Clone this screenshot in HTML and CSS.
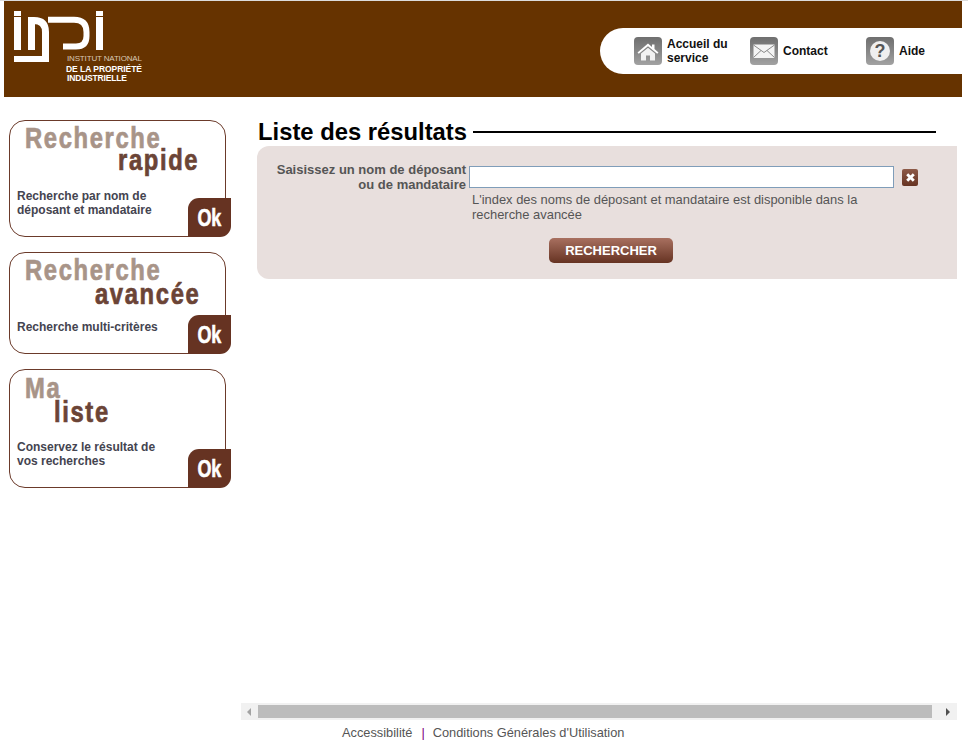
FILE: index.html
```html
<!DOCTYPE html>
<html lang="fr">
<head>
<meta charset="utf-8">
<title>INPI - Liste des résultats</title>
<link rel="stylesheet" href="styles.css">
</head>
<body>
<header class="header">
  <svg class="logo" width="140" height="96" viewBox="0 0 140 96" aria-label="INPI">
    <g fill="#fff">
      <rect x="10" y="10" width="7" height="5"/>
      <rect x="10" y="16" width="7" height="33"/>
      <rect x="10" y="55" width="35" height="6"/>
      <rect x="92" y="10" width="7" height="5"/>
      <rect x="92" y="16" width="7" height="33"/>
    </g>
    <g fill="none" stroke="#fff" stroke-width="7">
      <path d="M27.5 49V19.5H30Q41.5 19.5 41.5 31V61"/>
      <path d="M44 18.8H70Q82.5 18.8 82.5 31V35Q82.5 45.5 72 45.5H59" stroke-width="6"/>
    </g>
    <text class="logo-line1" x="63" y="60" textLength="75">INSTITUT NATIONAL</text>
    <text class="logo-line2" x="62" y="70.5" textLength="76">DE LA PROPRIÉTÉ</text>
    <text class="logo-line2" x="63" y="80" textLength="60">INDUSTRIELLE</text>
  </svg>
  <nav class="nav">
    <a class="nav-item" href="#">
      <svg class="nav-icon" width="28" height="28" viewBox="0 0 28 28">
        <use href="#tile"/>
        <path d="M3.5 15.5L14 6.5l4 3.4V7.5h2.5v4.6l4 3.4-1.3 1.2L14 9.2 4.8 16.7z" fill="#fff"/>
        <path d="M7 16.5L14 10.8l7 5.7v7h-5v-5h-4v5H7z" fill="#f2f2f2"/>
      </svg>
      <span>Accueil du<br>service</span>
    </a>
    <a class="nav-item" href="#">
      <svg class="nav-icon" width="28" height="28" viewBox="0 0 28 28">
        <use href="#tile"/>
        <rect x="3.5" y="7.5" width="21" height="13.5" fill="#f4f4f4"/>
        <path d="M3.5 8l10.5 7.5L24.5 8M3.5 20.5l7.5-7M24.5 20.5l-7.5-7" fill="none" stroke="#8a8a8a" stroke-width="1"/>
      </svg>
      <span>Contact</span>
    </a>
    <a class="nav-item" href="#">
      <svg class="nav-icon" width="28" height="28" viewBox="0 0 28 28">
        <use href="#tile"/>
        <circle cx="14" cy="14" r="10" fill="#efefef"/>
        <text class="qmark" x="14" y="19.5" text-anchor="middle">?</text>
      </svg>
      <span>Aide</span>
    </a>
  </nav>
</header>

<svg class="defs" width="0" height="0">
  <defs>
    <linearGradient id="tileGrad" x1="0" y1="0" x2="0" y2="1">
      <stop offset="0" stop-color="#6f6f6f"/>
      <stop offset="0.5" stop-color="#868686"/>
      <stop offset="1" stop-color="#a2a2a2"/>
    </linearGradient>
    <rect id="tile" width="28" height="28" rx="4" fill="url(#tileGrad)"/>
  </defs>
</svg>

<div class="page">
  <aside class="sidebar">
    <a class="card card-rapide" href="#">
      <div class="card-title">Recherche</div>
      <div class="card-sub sub-rapide">rapide</div>
      <p class="card-text">Recherche par nom de<br>déposant et mandataire</p>
      <span class="ok"><span class="ok-label">Ok</span></span>
    </a>
    <a class="card card-avancee" href="#">
      <div class="card-title">Recherche</div>
      <div class="card-sub sub-avancee">avancée</div>
      <p class="card-text">Recherche multi-critères</p>
      <span class="ok"><span class="ok-label">Ok</span></span>
    </a>
    <a class="card card-liste" href="#">
      <div class="card-title">Ma</div>
      <div class="card-sub sub-liste">liste</div>
      <p class="card-text">Conservez le résultat de<br>vos recherches</p>
      <span class="ok"><span class="ok-label">Ok</span></span>
    </a>
  </aside>

  <main class="main">
    <div class="heading">
      <h1>Liste des résultats</h1>
      <span class="heading-rule"></span>
    </div>
    <form class="panel">
      <label class="field-label" for="q">Saisissez un nom de déposant<br>ou de mandataire</label>
      <div class="field">
        <div class="input-row">
          <input id="q" class="input" type="text">
          <button class="clear" type="button" aria-label="Effacer">
            <svg width="11" height="11" viewBox="0 0 10 10"><path d="M2 2l6 6M8 2l-6 6" stroke="#fff" stroke-width="2.6"/></svg>
          </button>
        </div>
        <p class="help">L'index des noms de déposant et mandataire est disponible dans la recherche avancée</p>
      </div>
      <div class="actions"><button class="submit" type="button">RECHERCHER</button></div>
    </form>

    <div class="scrollbar">
      <span class="arrow arrow-left"></span>
      <span class="thumb"></span>
      <span class="arrow arrow-right"></span>
    </div>
    <footer class="footer">
      <a href="#">Accessibilité</a>
      <span class="sep">|</span>
      <a class="footer-last" href="#">Conditions Générales d'Utilisation</a>
    </footer>
  </main>
</div>
</body>
</html>
```
FILE: styles.css
```css
* { box-sizing: border-box; }
html, body { margin: 0; height: 100%; }
body {
  height: 746px;
  overflow: hidden;
  display: flex;
  flex-direction: column;
  border-top: 1px solid #dcdcdc;
  background: #fff;
  font-family: "Liberation Sans", Arial, sans-serif;
  font-size: 12px;
  color: #555;
}
a { text-decoration: none; color: inherit; }
.defs { position: absolute; }

.header {
  flex: none;
  width: 958px;
  height: 96px;
  margin-left: 4px;
  background: #663300;
  display: flex;
  justify-content: space-between;
  align-items: flex-start;
}
.logo { display: block; }
.logo-line1 { font: 8px "Liberation Sans", sans-serif; fill: #d9c8b6; }
.logo-line2 { font: bold 8.5px "Liberation Sans", sans-serif; fill: #fff; }
.nav {
  width: 362px;
  height: 46px;
  margin-top: 27px;
  padding-left: 34px;
  background: #fff;
  border-radius: 23px 0 0 23px;
  display: flex;
  align-items: center;
}
.nav-item {
  flex: none;
  width: 116px;
  display: flex;
  align-items: center;
  gap: 5px;
  font-weight: bold;
  line-height: 14px;
  color: #111;
}
.nav-icon { flex: none; display: block; }
.qmark { font: bold 18px "Liberation Sans", sans-serif; fill: #555; }

.page { flex: 1; display: flex; min-height: 0; }
.sidebar {
  flex: none;
  width: 241px;
  padding: 23px 0 0 9px;
  display: flex;
  flex-direction: column;
  gap: 15px;
}
.card {
  position: relative;
  display: block;
  width: 217px;
  padding: 0 0 0 7px;
  border: 1px solid #6b3a2a;
  border-radius: 16px;
  background: #fff;
}
.card-rapide { height: 117px; }
.card-avancee { height: 102px; }
.card-liste { height: 119px; }
.card-title, .card-sub {
  font-weight: bold;
  font-size: 29px;
  line-height: 26px;
  letter-spacing: 2px;
  white-space: nowrap;
  -webkit-text-stroke: 0.7px currentColor;
  transform: scaleX(0.82);
  transform-origin: left center;
}
.card-title { color: #a89488; margin: 4px 0 0 8px; }
.card-sub { color: #6b4436; }
.sub-rapide { margin: -4px 0 0 101px; }
.sub-avancee { margin: -2px 0 0 78px; }
.sub-liste { margin: -2px 0 0 37px; }
.card-liste .card-title { margin-top: 5px; }
.card-text {
  margin: 0;
  font-weight: bold;
  line-height: 14px;
  color: #444450;
}
.card-rapide .card-text { margin-top: 16px; }
.card-avancee .card-text { margin-top: 13px; }
.card-liste .card-text { margin-top: 15px; }
.ok {
  position: absolute;
  right: -6px;
  bottom: -1px;
  width: 43px;
  height: 39px;
  background: #663322;
  border-radius: 11px 0 11px 0;
  color: #fff;
  font-weight: bold;
  font-size: 23px;
  line-height: 41px;
  text-align: center;
}
.ok-label {
  display: inline-block;
  -webkit-text-stroke: 0.6px currentColor;
  transform: scaleX(0.78);
}

.main {
  flex: none;
  width: 716px;
  display: flex;
  flex-direction: column;
}
.heading {
  display: flex;
  align-items: center;
  gap: 6px;
  margin: 21px 21px 0 17px;
}
.heading h1 {
  margin: 0;
  font-size: 23.8px;
  line-height: 28px;
  font-weight: bold;
  color: #000;
}
.heading-rule { flex: 1; height: 2px; background: #000; }
.panel {
  margin: 0 0 0 16px;
  height: 133px;
  padding: 20px 0 0 0;
  background: #e8dfdd;
  border-radius: 12px 0 0 12px;
  display: grid;
  grid-template-columns: 209px 1fr;
  column-gap: 3px;
  align-content: start;
}
.field-label {
  text-align: right;
  font-size: 13px;
  font-weight: bold;
  line-height: 15px;
  margin-top: -4px;
  color: #555;
  white-space: nowrap;
}
.input-row { display: flex; align-items: center; gap: 8px; }
.input {
  width: 425px;
  height: 22px;
  padding: 0;
  border: 1px solid #7f9db9;
  background: #fff;
}
.clear {
  width: 16px;
  height: 17px;
  padding: 0;
  border: 0;
  border-radius: 2px;
  background: linear-gradient(#8d5a48, #663322);
  display: flex;
  align-items: center;
  justify-content: center;
}
.help {
  margin: 4px 0 0 3px;
  width: 400px;
  font-size: 12.93px;
  line-height: 15px;
  color: #555;
}
.actions {
  grid-column: 1 / -1;
  margin: 16px 0 0 292px;
}
.submit {
  width: 124px;
  height: 25px;
  padding: 0;
  border: 0;
  border-radius: 5px;
  background: linear-gradient(#a87060, #663322);
  color: #fff;
  font: bold 13px "Liberation Sans", sans-serif;
}
.scrollbar {
  margin-top: auto;
  height: 17px;
  background: #f1f1f1;
  display: flex;
  align-items: center;
  justify-content: space-between;
}
.thumb { width: 674px; height: 13px; background: #bcbcbc; }
.arrow { width: 0; height: 0; border-top: 4px solid transparent; border-bottom: 4px solid transparent; }
.arrow-left { margin-left: 6px; margin-right: 7px; border-right: 4px solid #a3a3a3; }
.arrow-right { margin-right: 7px; margin-left: 14px; border-left: 4px solid #505050; }
.footer {
  height: 26px;
  padding: 5px 0 0 101px;
  font-size: 12.8px;
  line-height: 16px;
  display: flex;
  gap: 9px;
  color: #555;
}
.footer-last { margin-left: -1px; }
.sep { color: #800080; }
```
